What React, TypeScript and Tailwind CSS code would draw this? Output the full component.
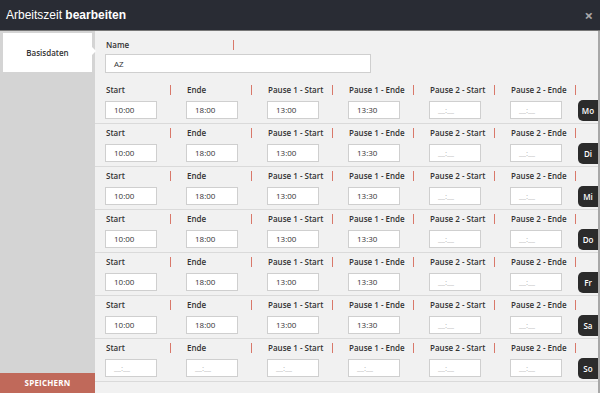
const columns = ['Start', 'Ende', 'Pause 1 - Start', 'Pause 1 - Ende', 'Pause 2 - Start', 'Pause 2 - Ende'];

type Day = { tag: string; values: string[] };

const full = ['10:00', '18:00', '13:00', '13:30', '', ''];

const days: Day[] = [
  { tag: 'Mo', values: full },
  { tag: 'Di', values: full },
  { tag: 'Mi', values: full },
  { tag: 'Do', values: full },
  { tag: 'Fr', values: full },
  { tag: 'Sa', values: full },
  { tag: 'So', values: ['', '', '', '', '', ''] },
];

function Tick() {
  return <span className="block w-px h-[10px] bg-[#d9786a]" />;
}

function TimeField({ value }: { value: string }) {
  return (
    <div className="w-[52px] h-[18px] bg-white border border-[#cfcfcf] flex items-center pl-[8px] text-[8px]">
      {value ? (
        <span className="text-[#333]">{value}</span>
      ) : (
        <span className="text-[#b5b5b5]">__:__</span>
      )}
    </div>
  );
}

function DayRow({ day }: { day: Day }) {
  return (
    <div className="h-[43px] border-b border-[#dadada] flex pl-[10px]">
      {columns.map((label, i) => (
        <div key={label} className={i === 5 ? 'w-[68px] flex flex-col' : 'w-[81px] flex flex-col'}>
          <div className="h-[12px] mt-[3px] flex items-center w-[66px] justify-between">
            <span className="pl-px text-[8px] font-semibold text-[#333] leading-none">{label}</span>
            <Tick />
          </div>
          <div className="mt-[5px]">
            <TimeField value={day.values[i]} />
          </div>
        </div>
      ))}
      <div className="ml-auto mt-[19px] w-[20px] h-[21px] bg-[#2b2b2b] rounded-l-[5px] flex items-center justify-center text-white text-[8px] font-semibold">
        {day.tag}
      </div>
    </div>
  );
}

export default function App() {
  return (
    <div className="w-[600px] h-[393px] flex flex-col overflow-hidden bg-[#f1f1f1]" style={{ fontFamily: '"Open Sans", sans-serif' }}>
      <div className="h-[31px] shrink-0 bg-[#292c34] border-b border-[#777] flex items-center justify-between pl-[6px] pr-[7px]">
        <span className="text-white text-[12px]" style={{ fontFamily: '"Liberation Sans", Arial, sans-serif' }}>
          Arbeitszeit <b>bearbeiten</b>
        </span>
        <span className="text-[#a9a9a9] text-[15px] font-bold leading-none">×</span>
      </div>
      <div className="flex flex-1 min-h-0">
        <aside className="w-[95px] shrink-0 bg-[#d4d4d4] flex flex-col">
          <div className="relative mt-[2px] ml-[3px] w-[89px] h-[39px] bg-white flex items-center justify-center text-[8px] font-semibold text-[#333]">
            Basisdaten
            <span className="absolute right-[-4px] top-[14px] w-0 h-0 border-y-[4px] border-y-transparent border-l-[4px] border-l-white" />
          </div>
          <button type="button" className="mt-auto h-[20px] bg-[#c0695a] text-white text-[8px] font-bold tracking-wide">
            SPEICHERN
          </button>
        </aside>
        <main className="flex-1 border-r-[3px] border-[#a8a8a8] flex flex-col">
          <div className="pl-[10px] pt-[8px] pb-[8px]">
            <div className="h-[12px] w-[129px] flex items-center justify-between">
              <span className="pl-px text-[8px] font-semibold text-[#333] leading-none">Name</span>
              <Tick />
            </div>
            <div className="mt-[3px] w-[266px] h-[19px] bg-white border border-[#cfcfcf] flex items-center pl-[8px] text-[8px] text-[#333]">
              AZ
            </div>
          </div>
          {days.map((d) => (
            <DayRow key={d.tag} day={d} />
          ))}
        </main>
      </div>
    </div>
  );
}
